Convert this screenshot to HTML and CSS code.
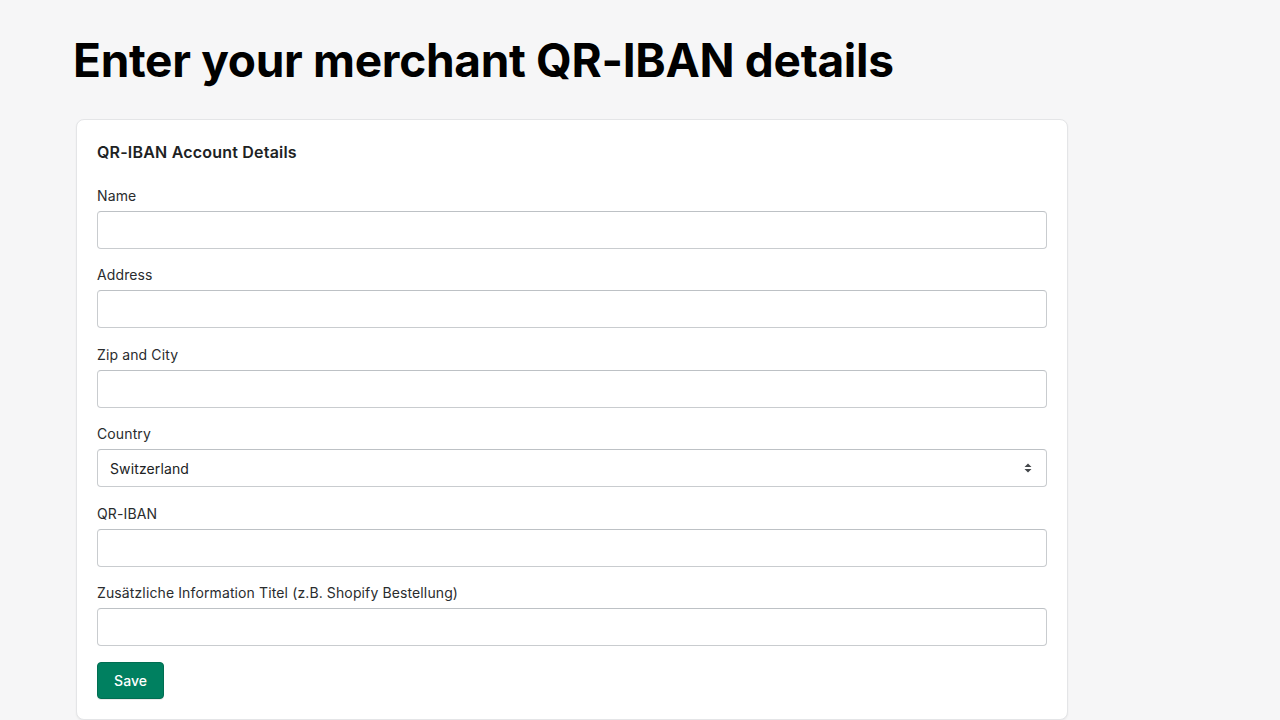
FILE: index.html
```html
<!DOCTYPE html>
<html lang="en">
<head>
    <meta charset="UTF-8">
    <meta name="viewport" content="width=device-width, initial-scale=1.0">
    <title>QR-IBAN Details</title>
    <link rel="stylesheet" href="styles.css">
</head>
<body>

<div class="page">
    <h1>Enter your merchant QR-IBAN details</h1>

    <div class="card">
        <h2>QR-IBAN Account Details</h2>

        <form class="form">
            <div class="field">
                <label for="name">Name</label>
                <input type="text" id="name">
            </div>
            <div class="field">
                <label for="address">Address</label>
                <input type="text" id="address">
            </div>
            <div class="field">
                <label for="zip">Zip and City</label>
                <input type="text" id="zip">
            </div>
            <div class="field">
                <label for="country">Country</label>
                <div class="select-wrap">
                    <select id="country">
                        <option>Switzerland</option>
                        <option>Liechtenstein</option>
                    </select>
                    <svg class="select-arrow" width="10" height="12" viewBox="0 0 10 12">
                        <path d="M5 1.5 L8.5 5 H1.5 Z M5 10.5 L8.5 7 H1.5 Z" fill="#44474a"/>
                    </svg>
                </div>
            </div>
            <div class="field">
                <label for="iban">QR-IBAN</label>
                <input type="text" id="iban">
            </div>
            <div class="field">
                <label for="info">Zusätzliche Information Titel (z.B. Shopify Bestellung)</label>
                <input type="text" id="info">
            </div>
            <div>
                <button type="button" class="btn-save">Save</button>
            </div>
        </form>
    </div>
</div>

</body>
</html>
```

FILE: styles.css
```css
body {
    margin: 0;
    background-color: #f6f6f7;
    font-family: Inter, "Noto Sans", sans-serif;
    color: #202223;
}
.page {
    padding: 30px 0 0 73px;
    width: 995px;
}
h1 {
    margin: 0 0 29px 0;
    font-size: 46px;
    font-weight: 700;
    letter-spacing: -0.3px;
    line-height: 60px;
    color: #000;
}
.card {
    margin-left: 3px;
    background: #fff;
    border: 1px solid #e4e5e7;
    border-radius: 8px;
    padding: 20px;
    box-shadow: 0 1px 2px rgba(0, 0, 0, 0.06);
}
h2 {
    margin: 0 0 22px 0;
    font-size: 16px;
    font-weight: 600;
    letter-spacing: 0.2px;
    line-height: 24px;
}
.form {
    display: flex;
    flex-direction: column;
    gap: 16.4px;
}
.field label {
    display: block;
    font-size: 14px;
    letter-spacing: 0.12px;
    line-height: 20px;
    margin-bottom: 5px;
    color: #2a2c2e;
}
input[type="text"], select {
    display: block;
    box-sizing: border-box;
    width: 100%;
    height: 38px;
    border: 1px solid #c9cccf;
    border-top-color: #bdc1c5;
    border-radius: 4px;
    background: #fff;
    font-family: inherit;
    font-size: 14px;
    letter-spacing: 0.12px;
    padding: 0 12px;
    color: #202223;
}
.select-wrap {
    position: relative;
}
select {
    appearance: none;
    -webkit-appearance: none;
}
.select-arrow {
    position: absolute;
    right: 14px;
    top: 13px;
    pointer-events: none;
}
.btn-save {
    height: 37px;
    width: 67px;
    border: 1px solid #006e52;
    border-radius: 4px;
    background: #008060;
    color: #fff;
    font-family: inherit;
    font-size: 14px;
    font-weight: 500;
    box-shadow: 0 1px 0 rgba(0, 0, 0, 0.08);
}
```
